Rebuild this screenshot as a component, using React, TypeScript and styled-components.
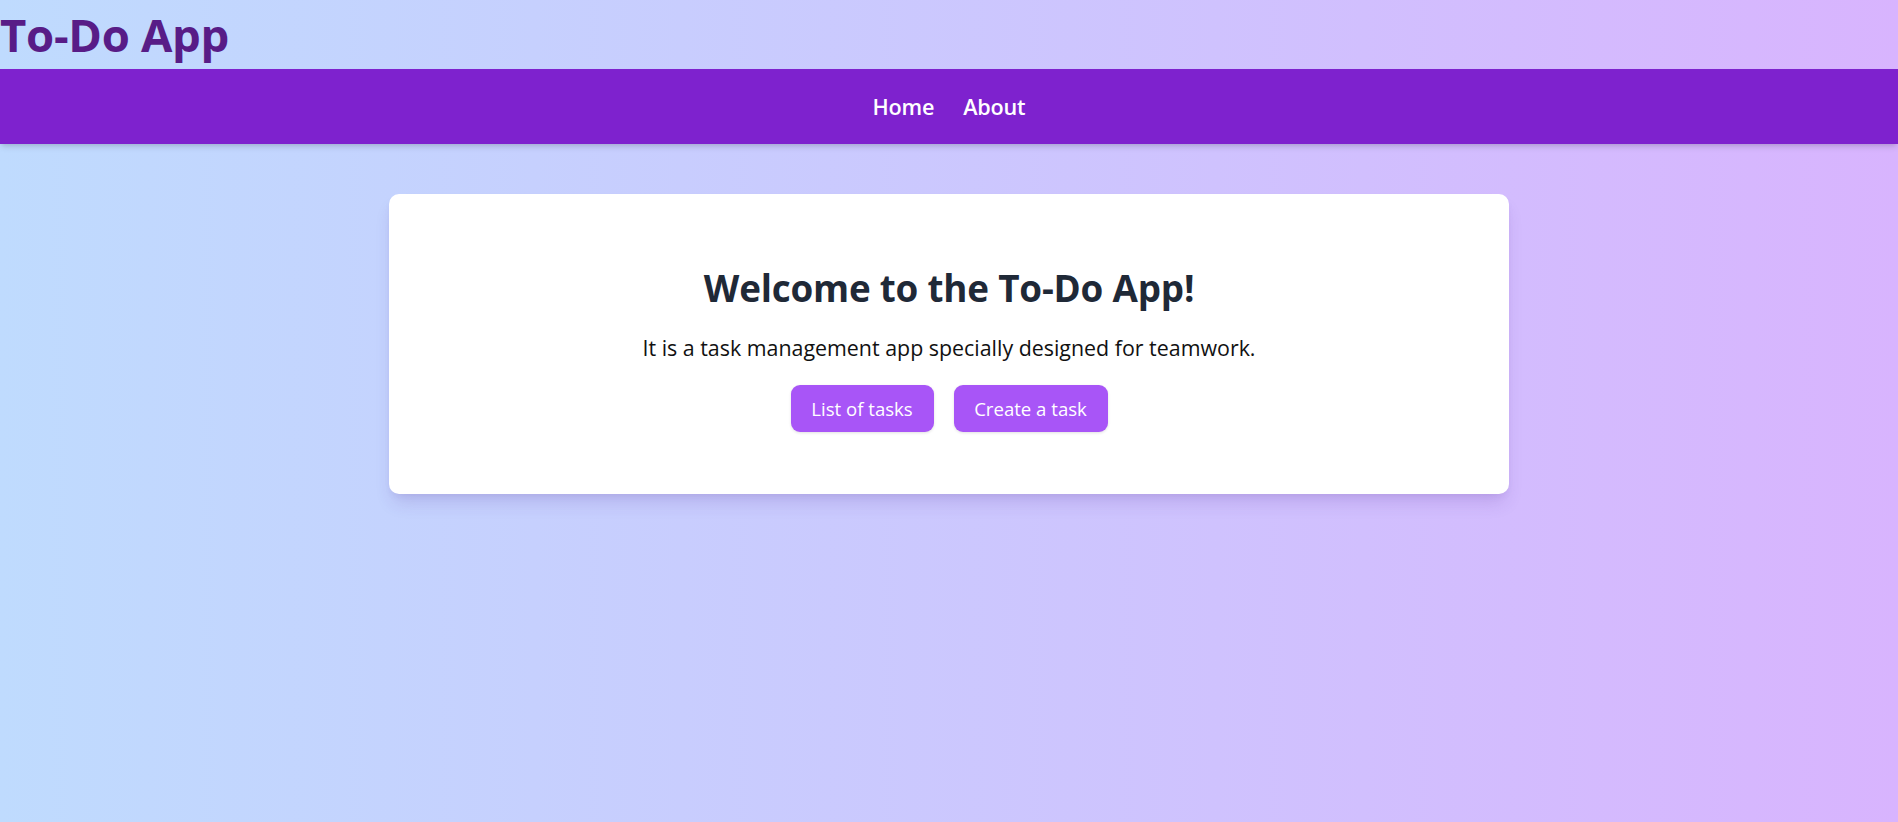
import React from "react";
import styled, { createGlobalStyle } from "styled-components";

const GlobalStyle = createGlobalStyle`
  html, body {
    margin: 0;
    padding: 0;
  }
  body {
    font-family: "Open Sans", "Noto Sans", sans-serif;
    min-height: 100vh;
    background: linear-gradient(to right, #bfdbfe, #d8b4fe);
  }
  * { box-sizing: border-box; }
`;

const Page = styled.div`
  min-height: 100vh;
  display: flex;
  flex-direction: column;
`;

const Title = styled.h1`
  margin: 0;
  font-size: 45.5px;
  line-height: 69px;
  height: 69px;
  font-weight: 700;
  color: #581c87;
  letter-spacing: -0.3px;
`;

const NavBar = styled.nav`
  height: 75px;
  background: #7e22ce;
  display: flex;
  align-items: center;
  justify-content: center;
  gap: 29px;
  box-shadow: 0 4px 6px -1px rgba(0, 0, 0, 0.12), 0 2px 4px -2px rgba(0, 0, 0, 0.1);
`;

const NavLink = styled.a`
  color: #ffffff;
  font-size: 21.6px;
  font-weight: 600;
  text-decoration: none;
  cursor: pointer;
  letter-spacing: -0.2px;
`;

const Main = styled.main`
  display: flex;
  justify-content: center;
  padding-top: 50px;
`;

const Card = styled.section`
  width: 1120px;
  height: 300px;
  background: #ffffff;
  border-radius: 10px;
  box-shadow: 0 12px 18px -4px rgba(80, 40, 140, 0.16), 0 4px 8px -4px rgba(80, 40, 140, 0.12);
  display: flex;
  flex-direction: column;
  align-items: center;
  padding-top: 70px;
`;

const Heading = styled.h2`
  margin: 0;
  font-size: 36.8px;
  line-height: 48px;
  font-weight: 700;
  color: #1f2937;
  letter-spacing: -0.2px;
`;

const Lead = styled.p`
  margin: 21px 0 0;
  font-size: 21.4px;
  line-height: 30px;
  color: #111111;
`;

const Actions = styled.div`
  display: flex;
  gap: 20px;
  margin-top: 22px;
`;

const ActionButton = styled.button<{ $width: number }>`
  width: ${(p) => p.$width}px;
  height: 47px;
  border: none;
  border-radius: 9px;
  background: #a855f7;
  color: #ffffff;
  font-family: "Open Sans", "Noto Sans", sans-serif;
  font-size: 18.6px;
  cursor: pointer;
  box-shadow: 0 1px 3px rgba(0, 0, 0, 0.12);
`;

export default function App() {
  return (
    <>
      <GlobalStyle />
      <Page>
        <Title>To-Do App</Title>
        <NavBar>
          <NavLink>Home</NavLink>
          <NavLink>About</NavLink>
        </NavBar>
        <Main>
          <Card>
            <Heading>Welcome to the To-Do App!</Heading>
            <Lead>It is a task management app specially designed for teamwork.</Lead>
            <Actions>
              <ActionButton $width={143}>List of tasks</ActionButton>
              <ActionButton $width={154}>Create a task</ActionButton>
            </Actions>
          </Card>
        </Main>
      </Page>
    </>
  );
}
